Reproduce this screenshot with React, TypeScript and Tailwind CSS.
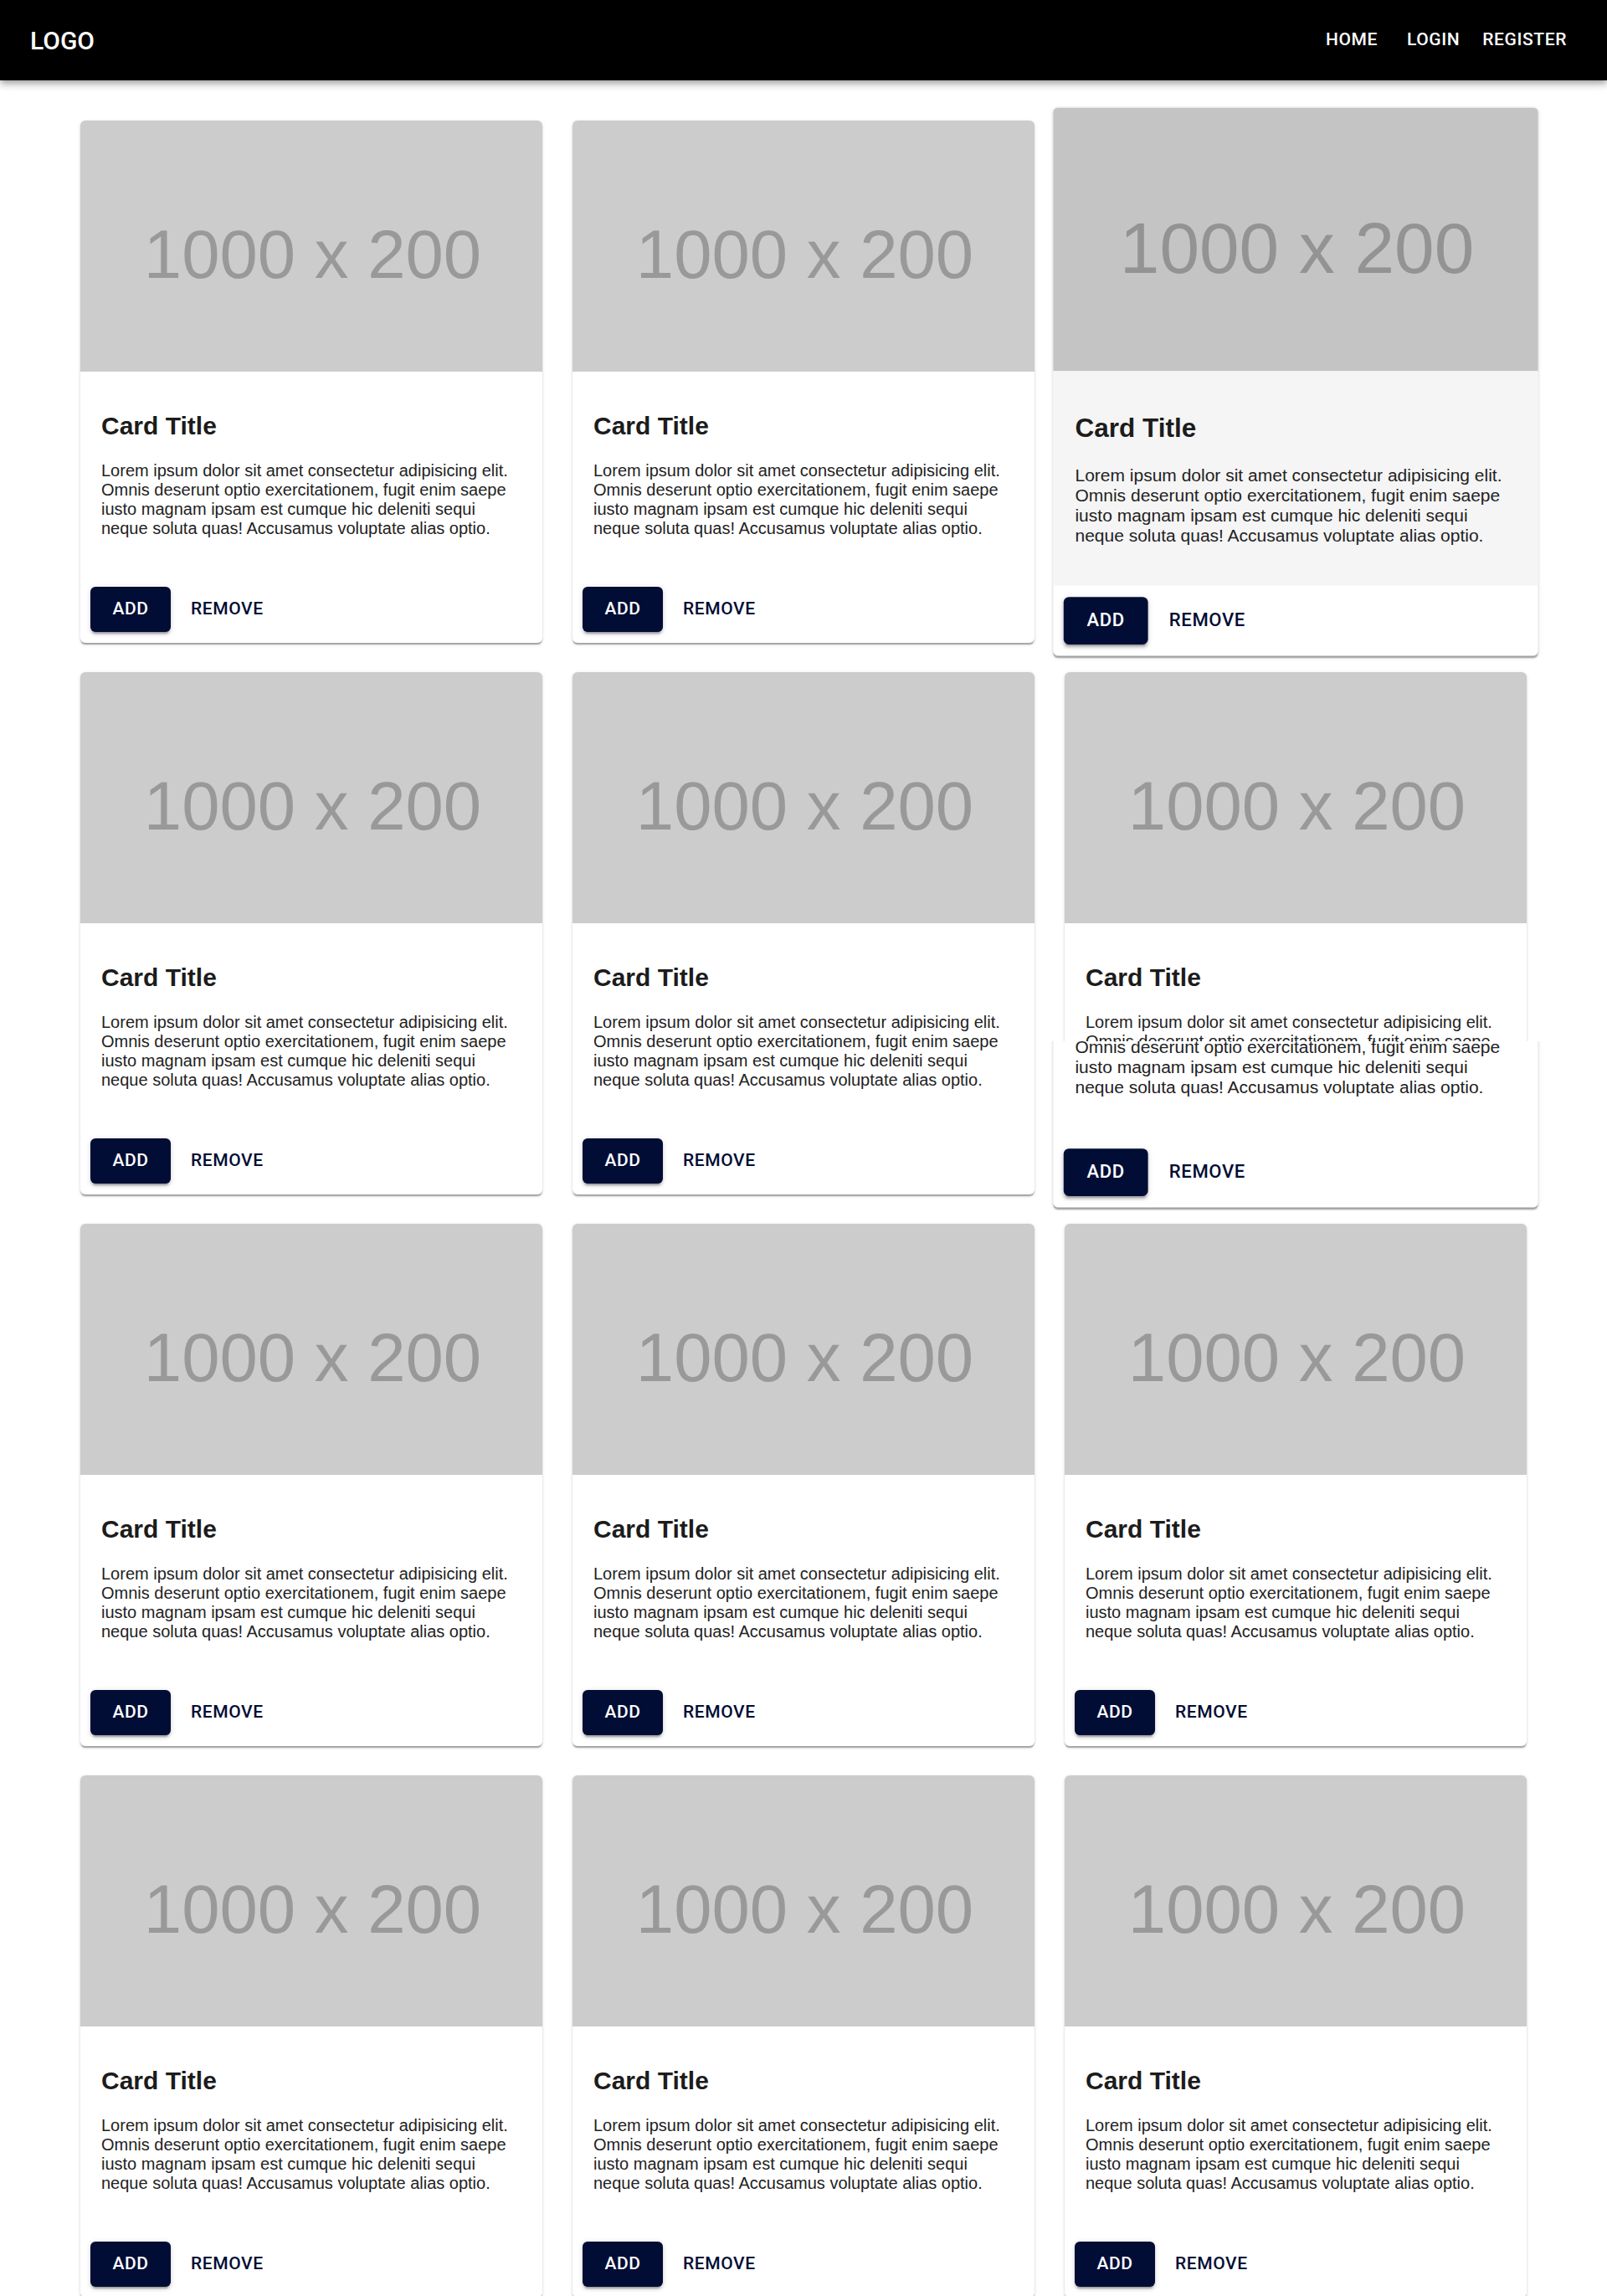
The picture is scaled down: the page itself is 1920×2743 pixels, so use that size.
import clsx from "clsx";

const lorem =
  "Lorem ipsum dolor sit amet consectetur adipisicing elit. Omnis deserunt optio exercitationem, fugit enim saepe iusto magnam ipsam est cumque hic deleniti sequi neque soluta quas! Accusamus voluptate alias optio.";

function Card({ hovered = false }: { hovered?: boolean }) {
  return (
    <div className="flex h-[624px] flex-col overflow-hidden rounded-[6px] bg-white shadow-[0_3px_1.5px_-1.5px_rgba(0,0,0,0.2),0_1.5px_1.5px_0_rgba(0,0,0,0.14),0_1.5px_4.5px_0_rgba(0,0,0,0.12)]">
      <div
        className={clsx(
          "flex h-[300px] shrink-0 items-center justify-center pt-[20px] pl-[3px] font-['Liberation_Sans',Arial,sans-serif] text-[81.5px]",
          hovered ? "bg-[#c4c4c4] text-[#939393]" : "bg-[#cccccc] text-[#999999]"
        )}
      >
        1000 x 200
      </div>
      <div
        className={clsx(
          "h-[244px] shrink-0 px-[25px] pt-[47px] font-['Liberation_Sans',Arial,sans-serif]",
          hovered && "bg-[#f5f5f5]"
        )}
      >
        <h2 className="text-[30px] leading-[36px] font-bold text-[#1c1c1c]">Card Title</h2>
        <p className="mt-[24px] text-[20px] leading-[23px] text-[#222222]">{lorem}</p>
      </div>
      <div className="flex items-center gap-[12px] px-[12px] pt-[13px] font-['Roboto',sans-serif] text-[21px] font-medium tracking-[0.6px]">
        <button className="h-[54px] w-[96px] rounded-[6px] bg-[#020d35] text-white uppercase shadow-[0_4.5px_1.5px_-3px_rgba(0,0,0,0.2),0_3px_3px_0_rgba(0,0,0,0.14),0_1.5px_7.5px_0_rgba(0,0,0,0.12)]">
          Add
        </button>
        <button className="h-[54px] px-[12px] text-[#020d35] uppercase">Remove</button>
      </div>
    </div>
  );
}

export default function App() {
  const cards = Array.from({ length: 12 }, (_, i) => i);

  return (
    <div className="min-h-screen bg-white">
      <nav className="relative z-20 flex h-[96px] items-center justify-between bg-black px-[36px] font-['Roboto',sans-serif] text-white shadow-[0_3px_6px_-1.5px_rgba(0,0,0,0.2),0_6px_7.5px_0_rgba(0,0,0,0.14),0_1.5px_15px_0_rgba(0,0,0,0.12)]">
        <div className="text-[30px] font-medium">LOGO</div>
        <div className="flex items-center text-[21px] font-medium tracking-[0.6px]">
          <a className="mr-[11px] px-[12px] py-[9px]">HOME</a>
          <a className="mr-[3px] px-[12px] py-[9px]">LOGIN</a>
          <a className="px-[12px] py-[9px]">REGISTER</a>
        </div>
      </nav>

      <main className="grid grid-cols-3 gap-x-[36px] gap-y-[35px] px-[96px] pt-[48px]">
        {cards.map((i) => {
          if (i === 2) {
            // hovered card, grown a bit
            return (
              <div key={i} className="relative z-10 scale-[1.05]">
                <Card hovered />
              </div>
            );
          }
          if (i === 5) {
            // half-painted hover transition
            return (
              <div key={i} className="relative">
                <Card />
                <div className="absolute inset-0 z-10 [clip-path:inset(441px_-20px_-20px_-20px)]">
                  <div className="scale-[1.05]">
                    <Card />
                  </div>
                </div>
              </div>
            );
          }
          return <Card key={i} />;
        })}
      </main>
    </div>
  );
}
